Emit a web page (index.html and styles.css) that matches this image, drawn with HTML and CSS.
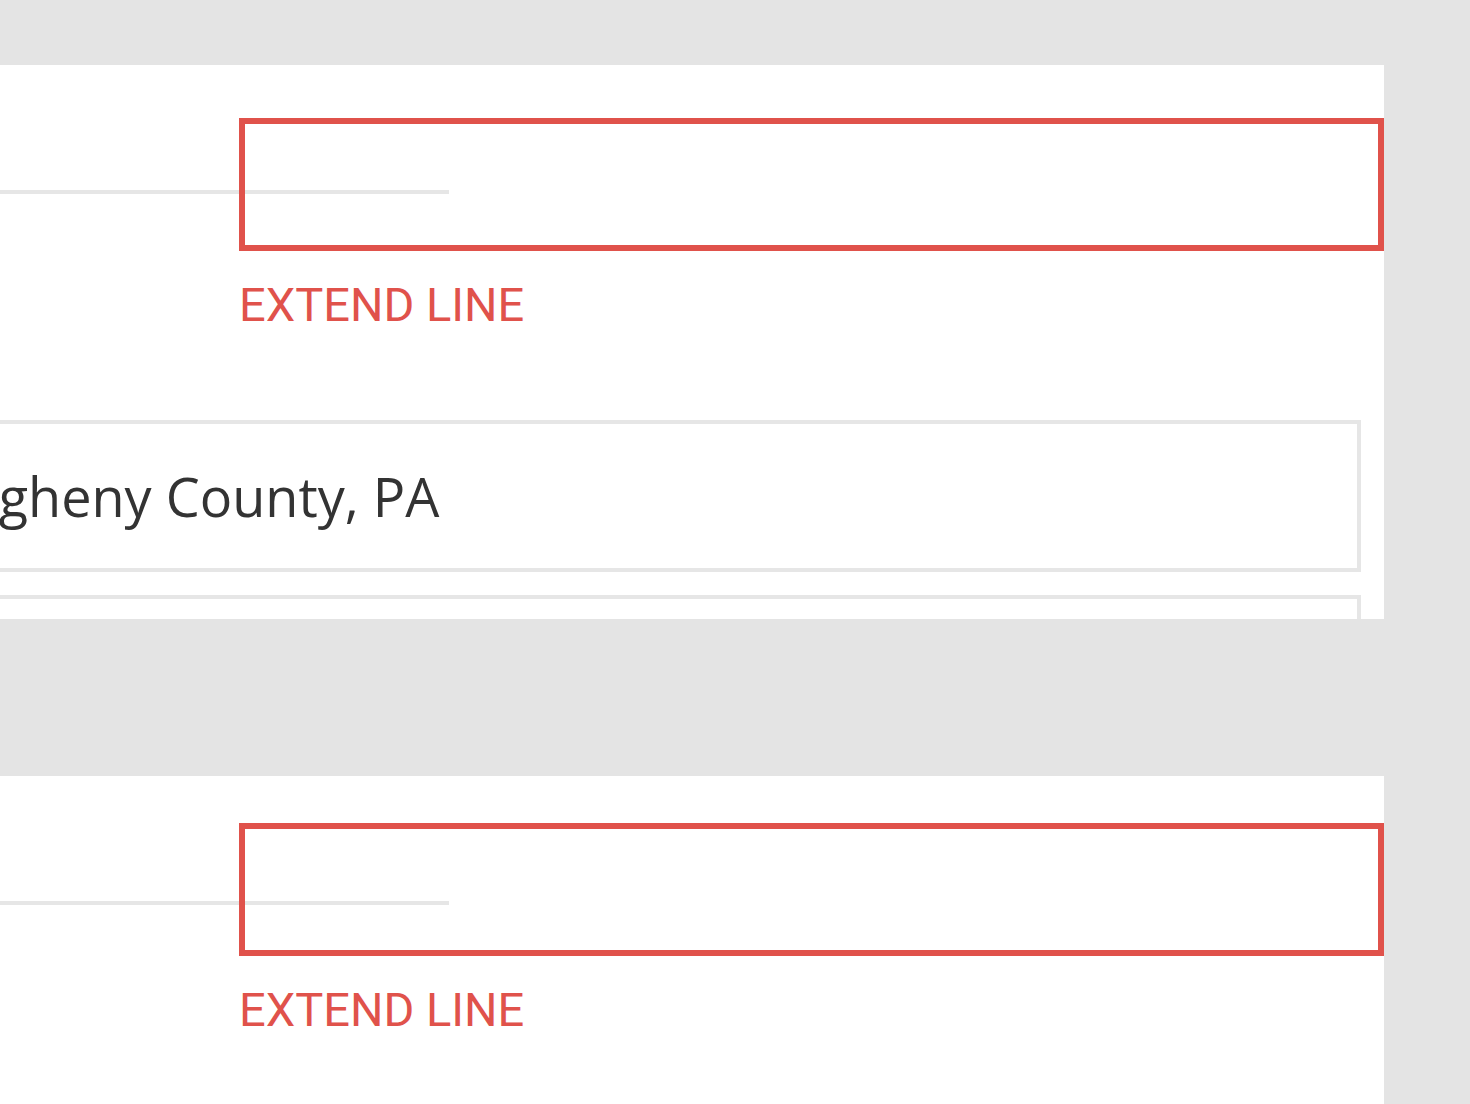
FILE: index.html
```html
<!DOCTYPE html>
<html lang="en">
<head>
<meta charset="utf-8">
<title>Extend line</title>
<link rel="stylesheet" href="styles.css">
</head>
<body>
<main class="page">
  <section class="panel panel-first">
    <div class="sign-line"></div>
    <div class="note note-first">
      <div class="note-box"></div>
      <div class="note-label">EXTEND LINE</div>
    </div>
    <div class="field">
      <span class="field-text">Allegheny County, PA</span>
    </div>
    <div class="field"></div>
  </section>
  <section class="panel panel-second">
    <div class="sign-line"></div>
    <div class="note note-second">
      <div class="note-box"></div>
      <div class="note-label">EXTEND LINE</div>
    </div>
  </section>
</main>
</body>
</html>
```
FILE: styles.css
```css
html, body {
  margin: 0;
  padding: 0;
  background: #e4e4e4;
}

.page {
  width: 1384px;
  padding-top: 65px;
  display: flex;
  flex-direction: column;
  gap: 157px;
}

.panel {
  position: relative;
  overflow: hidden;
  background: #ffffff;
  padding-top: 125px;
  padding-right: 23px;
  box-sizing: border-box;
  display: flex;
  flex-direction: column;
}

.panel-first {
  height: 554px;
}

.panel-second {
  height: 340px;
}

.sign-line {
  width: 449px;
  height: 4px;
  background: #e6e6e6;
  flex: none;
}

.note {
  position: absolute;
  left: 239px;
  right: 0;
  display: flex;
  flex-direction: column;
}

.note-first {
  top: 53px;
}

.note-second {
  top: 47px;
}

.note-box {
  height: 133px;
  border: 6px solid #e0524b;
  box-sizing: border-box;
}

.note-label {
  margin-top: 30px;
  font-family: Roboto, "Liberation Sans", sans-serif;
  font-size: 47px;
  line-height: 1;
  color: #e0524b;
  white-space: nowrap;
}

.field {
  flex: none;
  height: 152px;
  margin-left: -200px;
  border: 4px solid #e6e6e6;
  box-sizing: border-box;
  display: flex;
  align-items: center;
  padding-left: 103px;
}

.sign-line + .note + .field {
  margin-top: 226px;
}

.field + .field {
  margin-top: 23px;
}

.field-text {
  font-family: "Open Sans", "Liberation Sans", sans-serif;
  font-size: 54px;
  color: #333333;
  white-space: nowrap;
}
```
